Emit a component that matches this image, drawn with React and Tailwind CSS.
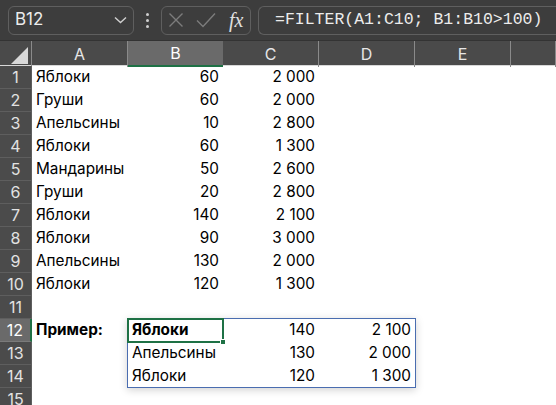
import React from 'react';

const rows = [
  ['Яблоки', '60', '2 000'],
  ['Груши', '60', '2 000'],
  ['Апельсины', '10', '2 800'],
  ['Яблоки', '60', '1 300'],
  ['Мандарины', '50', '2 600'],
  ['Груши', '20', '2 800'],
  ['Яблоки', '140', '2 100'],
  ['Яблоки', '90', '3 000'],
  ['Апельсины', '130', '2 000'],
  ['Яблоки', '120', '1 300'],
  ['', '', ''],
];

const spill = [
  ['Яблоки', '140', '2 100'],
  ['Апельсины', '130', '2 000'],
  ['Яблоки', '120', '1 300'],
];

const cols = ['A', 'B', 'C', 'D', 'E', ''];

function RowHead({ n, active }) {
  return (
    <div
      className={
        'h-[23px] flex items-center justify-center text-[16px] border-b border-r ' +
        (active
          ? 'bg-[#6a6a6a] text-white border-b-[#7a7a7a] border-r-2 border-r-[#1e7145]'
          : 'bg-[#4b4b4b] text-[#e2e2e2] border-b-[#5e5e5e] border-r-[#5e5e5e]')
      }
    >
      {n}
    </div>
  );
}

function Cell({ children, right, bold }) {
  return (
    <div
      className={
        'h-[23px] flex items-center px-[4px] text-[15.3px] text-black whitespace-nowrap overflow-visible ' +
        (right ? 'justify-end ' : '') +
        (bold ? 'font-bold' : '')
      }
    >
      {children}
    </div>
  );
}

function FormulaBar() {
  return (
    <div className="h-[40px] bg-[#3d3d3d] flex items-center pl-[8px] gap-0">
      <div className="w-[126px] h-[29px] rounded-md border border-[#5f5f5f] flex items-center justify-between pl-[6px] pr-[6px]">
        <span className="text-[17px] text-[#ececec]">B12</span>
        <svg width="13" height="8" viewBox="0 0 13 8" fill="none" stroke="#d0d0d0" strokeWidth="1.4">
          <path d="M1 1.5l5.5 5 5.5-5" />
        </svg>
      </div>
      <div className="w-[27px] flex flex-col items-center gap-[3px]">
        <span className="w-[3px] h-[3px] rounded-full bg-[#cfcfcf]" />
        <span className="w-[3px] h-[3px] rounded-full bg-[#cfcfcf]" />
        <span className="w-[3px] h-[3px] rounded-full bg-[#cfcfcf]" />
      </div>
      <div className="w-[90px] h-[29px] rounded-md border border-[#5f5f5f] flex items-center pl-[6px] gap-[12px]">
        <svg width="16" height="16" viewBox="0 0 16 16" stroke="#7c7c7c" strokeWidth="1.4" fill="none">
          <path d="M1.5 1.5l13 13M14.5 1.5l-13 13" />
        </svg>
        <svg width="20" height="16" viewBox="0 0 20 16" stroke="#7c7c7c" strokeWidth="1.4" fill="none">
          <path d="M1 8.5l6 6L19 1.5" />
        </svg>
        <span className="text-[20px] italic text-[#e0e0e0] leading-none ml-[1px]" style={{ fontFamily: '"Liberation Serif", serif' }}>
          fx
        </span>
      </div>
      <div className="ml-[7px] flex-1 h-[29px] rounded-l-md border border-r-0 border-[#5f5f5f] flex items-center pl-[16px]">
        <span className="text-[16.5px] text-[#ececec] whitespace-nowrap" style={{ fontFamily: '"Liberation Mono", monospace' }}>
          =FILTER(A1:C10; B1:B10&gt;100)
        </span>
      </div>
    </div>
  );
}

export default function App() {
  return (
    <div className="w-[556px] h-[405px] overflow-hidden bg-white" style={{ fontFamily: 'Inter, "Noto Sans", sans-serif' }}>
      <FormulaBar />
      <div className="h-[1px] bg-[#333333]" />
      <div className="grid grid-cols-[32px_96px_95px_96px_96px_96px_1fr] h-[25px] bg-[#4a4a4a] border-b border-[#d8d8d8]">
        <div className="relative border-r border-[#8a8a8a]">
          <svg className="absolute right-[3px] bottom-[3px]" width="17" height="17" viewBox="0 0 17 17">
            <path d="M17 0V17H0Z" fill="#d8d8d8" />
          </svg>
        </div>
        {cols.map((c, i) => (
          <div
            key={i}
            className={
              'flex items-center justify-center text-[16px] ' +
              (c === 'B'
                ? 'bg-[#6a6a6a] text-white border-b-2 border-[#1e7145]'
                : 'text-[#e6e6e6] border-r border-[#8a8a8a]')
            }
          >
            {c}
          </div>
        ))}
      </div>
      <div className="relative grid grid-cols-[32px_96px_95px_96px_96px_96px_1fr]">
        {rows.map((r, i) => (
          <React.Fragment key={i}>
            <RowHead n={i + 1} />
            <Cell>{r[0]}</Cell>
            <Cell right>{r[1]}</Cell>
            <Cell right>{r[2]}</Cell>
            <Cell />
            <Cell />
            <Cell />
          </React.Fragment>
        ))}
        {spill.map((r, i) => (
          <React.Fragment key={'s' + i}>
            <RowHead n={i + 12} active={i === 0} />
            <Cell bold={i === 0}>{i === 0 ? 'Пример:' : ''}</Cell>
            <Cell bold={i === 0}>{r[0]}</Cell>
            <Cell right>{r[1]}</Cell>
            <Cell right>{r[2]}</Cell>
            <Cell />
            <Cell />
          </React.Fragment>
        ))}
        <RowHead n={15} />
        <Cell />
        <Cell />
        <Cell />
        <Cell />
        <Cell />
        <Cell />

        <div className="absolute left-[127px] top-[252px] w-[289px] h-[70px] border border-[#4a6db0] shadow-[0_2px_8px_rgba(0,0,0,0.18)] pointer-events-none" />
        <div className="absolute left-[127px] top-[252px] w-[97px] h-[25px] border-2 border-[#1e7145] pointer-events-none">
          <span className="absolute right-[-4px] bottom-[-4px] w-[6px] h-[6px] bg-[#1e7145] border border-white" />
        </div>
      </div>
    </div>
  );
}
